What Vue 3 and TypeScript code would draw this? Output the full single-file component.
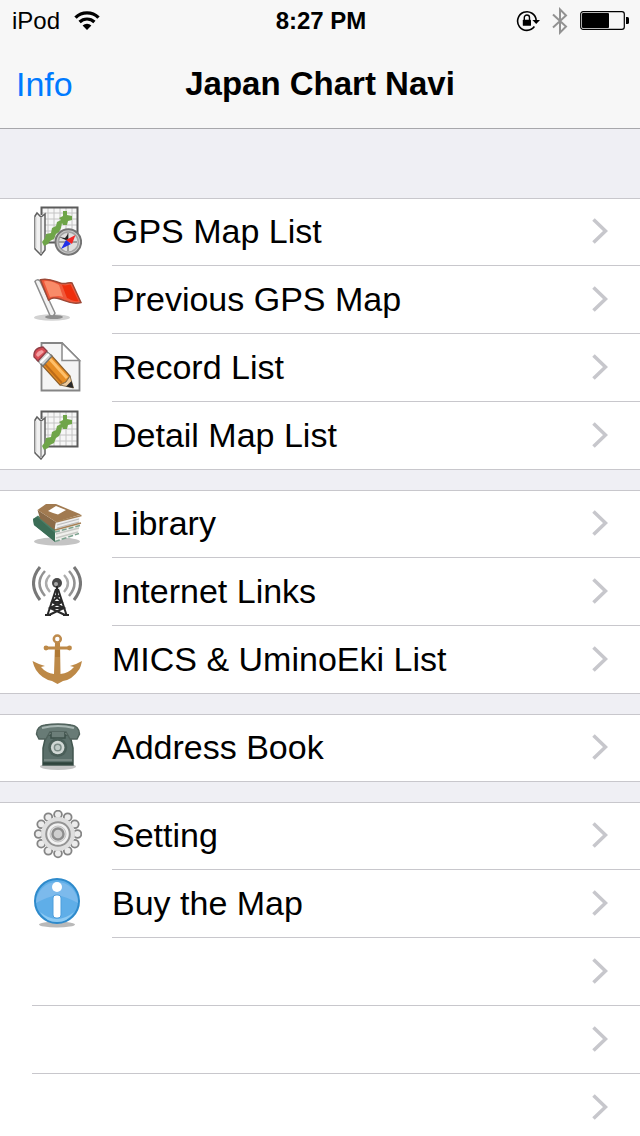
<script setup lang="ts">
type IconName =
  | 'gps' | 'flag' | 'record' | 'map' | 'books' | 'antenna' | 'anchor' | 'phone' | 'gear' | 'info'

interface Entry {
  label: string
  icon?: IconName
}

const groups: Entry[][] = [
  [
    { label: 'GPS Map List', icon: 'gps' },
    { label: 'Previous GPS Map', icon: 'flag' },
    { label: 'Record List', icon: 'record' },
    { label: 'Detail Map List', icon: 'map' },
  ],
  [
    { label: 'Library', icon: 'books' },
    { label: 'Internet Links', icon: 'antenna' },
    { label: 'MICS & UminoEki List', icon: 'anchor' },
  ],
  [{ label: 'Address Book', icon: 'phone' }],
  [
    { label: 'Setting', icon: 'gear' },
    { label: 'Buy the Map', icon: 'info' },
    { label: '' },
    { label: '' },
    { label: '' },
  ],
]

// Twelve teeth spaced evenly round the gear's hub
const teeth = Array.from({ length: 12 }, (_, i) => {
  const a = (i * Math.PI) / 6
  return { x: 26 + 19.4 * Math.sin(a), y: 24 - 19.4 * Math.cos(a) }
})
</script>

<template>
  <div class="screen">
    <header class="top">
      <div class="status">
        <div class="carrier">
          <span>iPod</span>
          <svg width="26" height="20" viewBox="0 0 26 20" aria-hidden="true">
            <path d="M1.5 6.6a16.4 16.4 0 0 1 23 0" fill="none" stroke="#000" stroke-width="3.4" />
            <path d="M5.6 11a10.6 10.6 0 0 1 14.8 0" fill="none" stroke="#000" stroke-width="3.2" />
            <path d="M8.6 14.6a6.2 6.2 0 0 1 8.8 0L13 19z" />
          </svg>
        </div>
        <span class="clock">8:27 PM</span>
        <div class="indicators">
          <svg width="24" height="22" viewBox="0 0 24 22" aria-hidden="true">
            <path d="M18.4 16.6A9.3 9.3 0 1 1 20.2 10.5" fill="none" stroke="#000" stroke-width="1.6" />
            <path d="M16.4 10H24l-3.8 4z" />
            <rect x="6.8" y="9.8" width="8.2" height="6" rx=".6" />
            <path d="M8.3 10V7.6a2.6 2.6 0 0 1 5.2 0V10" fill="none" stroke="#000" stroke-width="1.4" />
          </svg>
          <svg width="16" height="28" viewBox="0 0 16 28" aria-hidden="true">
            <path d="M1 7.5L14 19.5L8 25.6V2.4L14 8.5L1 20.5" fill="none" stroke="#929292" stroke-width="2" />
          </svg>
          <svg width="50" height="20" viewBox="0 0 50 20" aria-hidden="true">
            <rect x=".7" y=".7" width="43.6" height="17.6" rx="2.4" fill="none" stroke="#000" stroke-width="1.2" />
            <rect x="2" y="2" width="27" height="15" rx="1" />
            <path d="M46 6h1.5a1.5 1.5 0 0 1 1.5 1.5v4a1.5 1.5 0 0 1-1.5 1.5H46z" />
          </svg>
        </div>
      </div>
      <nav class="bar">
        <button type="button" class="info">Info</button>
        <h1>Japan Chart Navi</h1>
      </nav>
    </header>

    <main class="list">
      <ul v-for="(group, g) in groups" :key="g" class="group">
        <li v-for="(entry, r) in group" :key="r">
          <a href="#" class="row">
            <svg v-if="entry.icon" class="icon" viewBox="0 0 50 50" aria-hidden="true">
              <g v-if="entry.icon === 'gps' || entry.icon === 'map'">
                <path d="M10 1.5H45.5V36.5H13V8L10 6z" fill="#f7f7f7" />
                <path d="M16 2V36M22 2V36M28 2V36M34 2V36M40 2V36M10 7H45M13 13H45M13 19H45M13 25H45M13 31H45" stroke="#c4c4c4" />
                <path d="M9.5 9V1.5H45.5V36.5H14" fill="none" stroke="#5b5b5b" stroke-width="2" />
                <path d="M3 10L5 7L9 11L13 8V44L9 49L3 43z" fill="#f1f1f1" stroke="#606060" stroke-width="1.5" />
                <path d="M9 11V48" stroke="#aaa" stroke-width="2" />
                <path d="M4 11V42" stroke="#ddd" stroke-width="1.5" />
                <path d="M31 5H35V9L40 10V14L36 15L35 19H31L30 17L29 22L27 26L24 28L22 33L18 35L16 38L12 40L10 36L13 32L14 28L19 27L20 22L24 20L25 16L29 14L27 12L31 10z" fill="#6fa549" />
                <g v-if="entry.icon === 'gps'">
                  <circle cx="36.3" cy="36" r="12.8" fill="#c8c8c8" stroke="#747474" stroke-width="2" />
                  <circle cx="36.3" cy="36" r="10" fill="#dedede" stroke="#a4a4a4" stroke-width="1.5" />
                  <path d="M36 27V45M27 36H45" stroke="#888" stroke-width="1.5" />
                  <path d="M27 31L33 32L36 28L36 35z" fill="#222" />
                  <path d="M43.5 29L40 38L34 34z" fill="#f22626" />
                  <path d="M29 43L39 38L34 34z" fill="#2230e8" />
                </g>
              </g>

              <g v-else-if="entry.icon === 'flag'">
                <ellipse cx="20" cy="43.5" rx="18" ry="3.2" fill="#d2d2d2" />
                <ellipse cx="22" cy="43" rx="9" ry="2" fill="#8e8e8e" />
                <path d="M3 7.5Q5 4.5 8 7L23 39Q22 43 18 41.5z" fill="#f2f2f2" stroke="#8c8c8c" stroke-width="1.5" />
                <path d="M8.5 5.8C16 3.5 22 7 28 9S37 7.500 40 9L49 28.500C40 31 34 27 28 25S20 24 16.500 26z" fill="#f0583a" stroke="#9d4836" stroke-width="1.5" />
                <path d="M12 7.5C19 6 22 9 27 11L31 23C26 21 21 23 18 23z" fill="#f98b69" />
                <path d="M30 11C34 12 36 11 38.5 10.5L46.5 27C41 28 38 25 35 24z" fill="#ee2e0c" />
              </g>

              <g v-else-if="entry.icon === 'record'">
                <path d="M9.5 1H30L47.5 18.5V48.5H9.5z" fill="#f4f4f4" stroke="#858585" stroke-width="1.8" />
                <path d="M30 1V18.5H47.5z" fill="#fff" stroke="#8b8b8b" stroke-width="1.5" />
                <path d="M19 13L38 34L34 40L28 43L9 22z" fill="#e68d24" stroke="#8d602c" stroke-width="1.2" />
                <path d="M17 16L35 36" stroke="#ffc06a" stroke-width="3" />
                <path d="M12 21L30 41" stroke="#bd6b18" stroke-width="2" />
                <path d="M38 34L41.500 46L28 43L34 40z" fill="#edc99b" stroke="#8e744f" />
                <path d="M39.5 39L41.5 46L34 44.5z" fill="#292929" />
                <path d="M14 9L20 14L11 24L5 18z" fill="#cdd0d0" stroke="#717474" stroke-width="1.3" />
                <path d="M17 12L8 21" stroke="#fff" stroke-width="2" />
                <path d="M2 15Q1 6 11 5L15 9L6 19z" fill="#d94d55" stroke="#913d45" stroke-width="1.3" />
                <path d="M4 13Q5 9 10 8L12 10L6 15z" fill="#f4a0a3" />
              </g>

              <g v-else-if="entry.icon === 'books'">
                <ellipse cx="25" cy="43.5" rx="23" ry="4" fill="#c4c4c4" />
                <path d="M1 21L6 17.5L23 31L23 43.5L2 27z" fill="#4b7f68" />
                <path d="M1 21L5 19L23 35V44L2 27z" fill="#3b6d56" />
                <path d="M23 32L48 26L46 36L23 44z" fill="#f0f0ed" />
                <path d="M24 36L47 30M24 40L46 34" stroke="#c7c9c4" stroke-width="1.5" />
                <path d="M23 43.5L47 35.5M23 34L48 27.5" stroke="#7ba28e" stroke-width="1.5" stroke-dasharray="5 2" />
                <path d="M5.5 12L24 24L22.5 32L8 20.5z" fill="#8b6b49" />
                <path d="M5.5 12L14 6H24L49 16.5L24 24z" fill="#a17a50" />
                <path d="M24 24.5L48 18L47 25L23 32z" fill="#eee" />
                <path d="M25 27L47 21M25 30L47 24" stroke="#bbb" stroke-width="1.2" />
                <path d="M23 32L49 25M24 24L49.5 17.5" stroke="#a58055" stroke-width="1.5" />
                <path d="M16 13L24 8L34 12L26 16.5L21 15z" fill="#fff" />
              </g>

              <g v-else-if="entry.icon === 'antenna'">
                <g fill="none">
                  <path d="M8 1Q-5 17 8 34M42 1Q55 17 42 34" stroke="#777" stroke-width="3" />
                  <path d="M13 5Q2 17 13 30M37 5Q48 17 37 30" stroke="#929292" stroke-width="2.5" />
                  <path d="M18 9Q10 17 18 26M32 9Q40 17 32 26" stroke="#acacac" stroke-width="2.3" />
                </g>
                <circle cx="25" cy="17" r="5" fill="#484848" />
                <circle cx="24" cy="18" r="2" fill="#aaa" />
                <path d="M25 20V30M24 23L15.5 49M26 23L34.5 49M22 29L30 36L18 42L33 49M28 29L20 36L32 42L17 49M20 36H30M18 42H32" fill="none" stroke="#292929" stroke-width="2" />
                <path d="M13 49H19M31 49H37" stroke="#292929" stroke-width="2" />
              </g>

              <g v-else-if="entry.icon === 'anchor'">
                <circle cx="25.3" cy="5" r="3.5" fill="#fff" stroke="#be8b4d" stroke-width="2.5" />
                <path d="M23 9H28L28.500 40Q37 39 42 33L38 32Q45 30 50 27Q49 32 47.500 35Q40 46 31 47L25.500 50L20 47Q10 45 4 36Q2 33 .5 27Q6 30 13 32L9 33Q14 39 22 40z" fill="#bd8947" />
                <path d="M14 14H37" stroke="#bd8947" stroke-width="3" />
                <circle cx="14" cy="14" r="2.4" fill="#bd8947" />
                <circle cx="37.5" cy="14" r="2.4" fill="#bd8947" />
                <path d="M23 16H28V23H23z" fill="#b07934" />
              </g>

              <g v-else-if="entry.icon === 'phone'">
                <ellipse cx="26" cy="44.5" rx="18" ry="3.5" fill="#c5c5c5" />
                <path d="M14 13H38L41 26V43H11V26z" fill="#5b6f6a" stroke="#41564f" stroke-width="1.5" />
                <path d="M4.5 12Q5 4 13 3Q26 1 39 3Q47 4 47.5 12L45 17H38L34 10H18L14 17H7z" fill="#687b76" stroke="#50625c" stroke-width="1.5" />
                <path d="M10 6Q26 2 42 6" fill="none" stroke="#a9b8b4" stroke-width="2" />
                <path d="M19 10V16H33V10" fill="#6c7e79" stroke="#3d504a" stroke-width="1.5" />
                <circle cx="25.7" cy="25.5" r="9.5" fill="#4a5e58" />
                <circle cx="25.7" cy="25.5" r="6.8" fill="#d1d8d5" />
                <circle cx="25.7" cy="25.5" r="3.3" fill="#c0cbc7" stroke="#7c8c87" stroke-width="1.5" />
                <path d="M12 38H40" stroke="#82918d" stroke-width="1.5" />
                <path d="M11 41.5H41" stroke="#2f443d" stroke-width="2.5" />
              </g>

              <g v-else-if="entry.icon === 'gear'">
                <circle v-for="(t, i) in teeth" :key="i" :cx="t.x" :cy="t.y" r="3.9" fill="#ececec" stroke="#858585" stroke-width="1.8" />
                <circle cx="26" cy="24" r="17" fill="#dedede" />
                <circle cx="26" cy="24" r="11.8" fill="#f2f2f2" stroke="#949494" stroke-width="2" />
                <circle cx="26" cy="24" r="8" fill="#dedede" stroke="#c5c5c5" />
                <circle cx="26" cy="24" r="5.5" fill="#cecece" stroke="#8d8d8d" stroke-width="2.4" />
              </g>

              <g v-else-if="entry.icon === 'info'">
                <ellipse cx="25" cy="46.5" rx="18" ry="3" fill="#b9b9b9" />
                <circle cx="25" cy="23" r="22" fill="#5faee8" stroke="#2e8acb" stroke-width="2" />
                <path d="M4 25A21 21 0 0 1 46 25Q35 19 25 17Q15 19 4 25z" fill="#7cbaec" />
                <path d="M8 34Q25 48 42 34Q36 44 25 44T8 34z" fill="#8dcaf3" />
                <circle cx="25" cy="9" r="5" fill="#fff" />
                <rect x="21" y="17" width="8" height="23" rx="3" fill="#fff" stroke="#4d9edc" />
              </g>
            </svg>
            <span class="content">
              <span class="label">{{ entry.label }}</span>
              <svg class="chevron" viewBox="0 0 16 26" aria-hidden="true">
                <path d="M1.5 1.5L13.500 13L1.500 24.500" fill="none" stroke="#c7c7cc" stroke-width="3.6" />
              </svg>
            </span>
          </a>
        </li>
      </ul>
    </main>
  </div>
</template>

<style>
body {
  margin: 0;
  background: #efeff4;
}
</style>

<style scoped>
.screen {
  display: flex;
  flex-direction: column;
  height: 100vh;
  background: #efeff4;
  color: #000;
  font-family: "Liberation Sans", Arial, sans-serif;
}

.top {
  flex: none;
  background: #f7f7f7;
  border-bottom: 1px solid #a7a7ab;
}

.status {
  display: grid;
  grid-template-columns: 1fr auto 1fr;
  align-items: center;
  height: 40px;
  padding: 0 10px 0 12px;
  font-size: 24px;
  line-height: 42px;
}

.carrier,
.indicators {
  display: flex;
  align-items: center;
  gap: 14px;
}

.indicators {
  gap: 12px;
  justify-content: flex-end;
}

.clock {
  font-weight: bold;
}

.bar {
  display: grid;
  grid-template-columns: 1fr auto 1fr;
  align-items: center;
  height: 88px;
  padding: 0 16px;
}

.info {
  justify-self: start;
  padding: 0;
  border: 0;
  background: none;
  color: #007aff;
  font: inherit;
  font-size: 34px;
}

h1 {
  margin: 0;
  font-size: 33px;
  font-weight: bold;
}

.list {
  display: flex;
  flex: 1;
  flex-direction: column;
  gap: 20px;
  min-height: 0;
  padding-top: 69px;
  overflow-y: auto;
  scrollbar-width: none;
}

.group {
  flex: none;
  margin: 0;
  padding: 0;
  background: #fff;
  box-shadow: inset 0 1px #c8c7cc, inset 0 -1px #c8c7cc;
  list-style: none;
}

.row {
  display: flex;
  height: 68px;
  padding-left: 32px;
  color: inherit;
  text-decoration: none;
}

.icon {
  flex: none;
  width: 50px;
  height: 50px;
  margin: 8px 30px 0 0;
}

.content {
  display: flex;
  flex: 1;
  align-items: center;
  justify-content: space-between;
  min-width: 0;
  padding: 0 32px 1px 0;
  border-bottom: 1px solid #c8c7cc;
}

.group li:last-child .content {
  border-bottom-color: transparent;
}

.label {
  font-size: 34px;
  line-height: 40px;
  white-space: nowrap;
}

.chevron {
  flex: none;
  width: 16px;
  height: 26px;
}
</style>
